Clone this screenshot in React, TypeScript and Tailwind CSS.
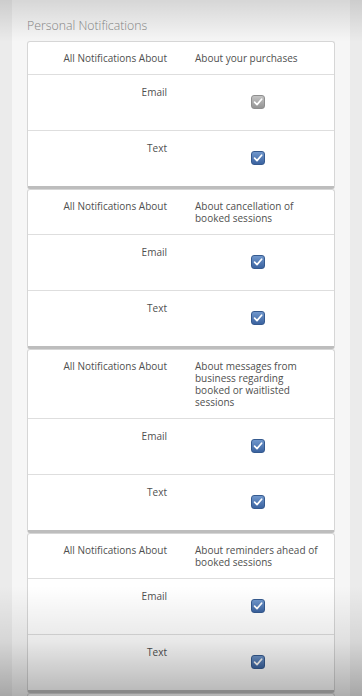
import React from "react";

type Group = { title: string[]; disabledEmail?: boolean };

const groups: Group[] = [
  { title: ["About your purchases"], disabledEmail: true },
  { title: ["About cancellation of", "booked sessions"] },
  { title: ["About messages from", "business regarding", "booked or waitlisted", "sessions"] },
  { title: ["About reminders ahead of", "booked sessions"] },
  { title: ["About other updates"] },
];

function Check({ disabled }: { disabled?: boolean }) {
  return (
    <span
      className={
        "inline-flex h-[14px] w-[14px] items-center justify-center rounded-[3px] border " +
        (disabled
          ? "border-[#8e8e8e] bg-gradient-to-b from-[#c4c4c4] to-[#949494]"
          : "border-[#355a8f] bg-gradient-to-b from-[#7097cc] to-[#3b63a0]")
      }
    >
      <svg width="10" height="10" viewBox="0 0 10 10">
        <path d="M1.6 5.2 L4 7.6 L8.6 2.2" fill="none" stroke="white" strokeWidth="1.7" strokeLinecap="round" strokeLinejoin="round" />
      </svg>
    </span>
  );
}

function Row({ label, disabled }: { label: string; disabled?: boolean }) {
  return (
    <div className="grid h-[56px] grid-cols-2 border-t border-[#dedede]">
      <div className="pr-[14px] pt-[11px] text-right leading-[12px]">{label}</div>
      <div className="flex justify-center pt-[20px]">
        <Check disabled={disabled} />
      </div>
    </div>
  );
}

export default function App() {
  return (
    <div
      className="relative h-[696px] w-full overflow-hidden bg-[#ebebeb] text-[10px] text-[#4f4f4f]"
      style={{ fontFamily: '"Open Sans", "Liberation Sans", sans-serif' }}
    >
      <div className="mx-[12px] h-full bg-[#f6f6f6] px-[15px] pt-[19px]">
        <div className="mb-[8px] text-[12.3px] font-light leading-[14px] text-[#8a8a8a]">Personal Notifications</div>
        <div className="flex flex-col">
          {groups.map((g, i) => (
            <div
              key={i}
              className="rounded-[3px] border border-b-[3px] border-[#d6d6d6] border-b-[#bdbdbd] bg-white"
            >
              <div className="grid grid-cols-2 py-[10px] leading-[12px]">
                <div className="pr-[14px] text-right">All Notifications About</div>
                <div className="pl-[14px]">
                  {g.title.map((t, j) => (
                    <div key={j}>{t}</div>
                  ))}
                </div>
              </div>
              <Row label="Email" disabled={g.disabledEmail} />
              <Row label="Text" />
            </div>
          ))}
        </div>
      </div>
      <div className="pointer-events-none absolute inset-x-0 top-0 h-[42px] bg-gradient-to-b from-[rgba(0,0,0,0.13)] to-transparent" />
      <div className="pointer-events-none absolute inset-x-0 bottom-0 h-[110px] bg-gradient-to-b from-transparent via-[rgba(0,0,0,0.09)] to-[rgba(0,0,0,0.29)]" />
    </div>
  );
}
